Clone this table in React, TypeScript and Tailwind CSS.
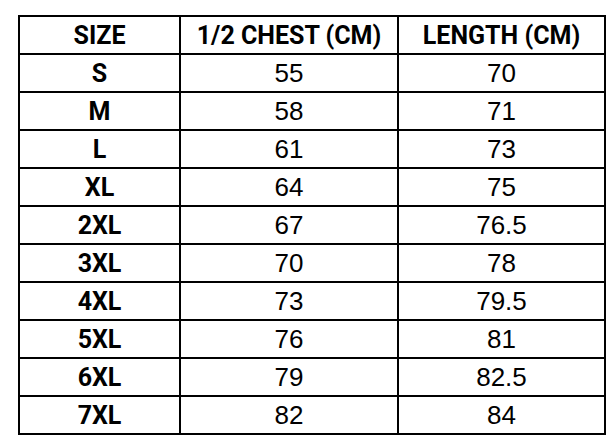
const rows = [
  ["S", "55", "70"],
  ["M", "58", "71"],
  ["L", "61", "73"],
  ["XL", "64", "75"],
  ["2XL", "67", "76.5"],
  ["3XL", "70", "78"],
  ["4XL", "73", "79.5"],
  ["5XL", "76", "81"],
  ["6XL", "79", "82.5"],
  ["7XL", "82", "84"],
];

const cell = "border-2 border-black p-0 text-center leading-none";
const bold = "font-['Roboto',sans-serif] font-bold text-[25px]";
const num = "font-['Liberation_Sans',sans-serif] text-[26px]";

export default function App() {
  return (
    <div className="w-[610px] h-[442px] bg-white pt-[15px] pl-[18px]">
      <table className="border-collapse text-black">
        <colgroup>
          <col className="w-[161px]" />
          <col className="w-[218px]" />
          <col className="w-[207px]" />
        </colgroup>
        <thead>
          <tr className="h-[38px]">
            <th className={`${cell} ${bold}`}>SIZE</th>
            <th className={`${cell} ${bold}`}>1/2 CHEST (CM)</th>
            <th className={`${cell} ${bold}`}>LENGTH (CM)</th>
          </tr>
        </thead>
        <tbody>
          {rows.map((r) => (
            <tr key={r[0]} className="h-[38px]">
              <td className={`${cell} ${bold}`}>{r[0]}</td>
              <td className={`${cell} ${num}`}>{r[1]}</td>
              <td className={`${cell} ${num}`}>{r[2]}</td>
            </tr>
          ))}
        </tbody>
      </table>
    </div>
  );
}
